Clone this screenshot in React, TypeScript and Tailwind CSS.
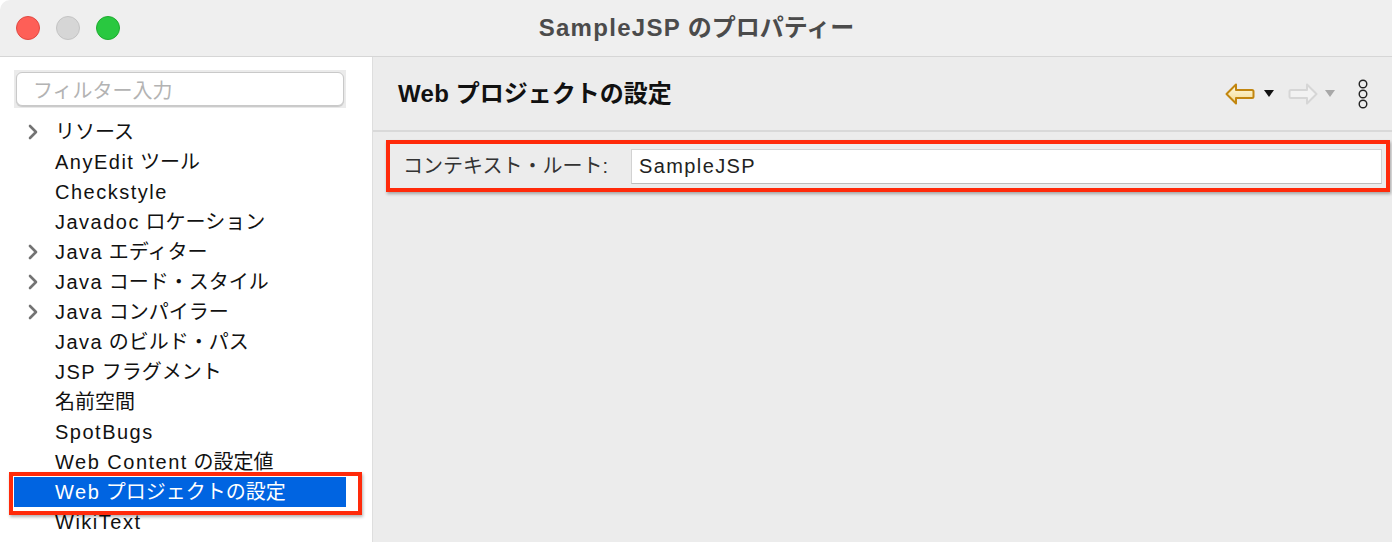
import React from "react";

const FONT = { fontFamily: '"Liberation Sans", "Noto Sans CJK JP", sans-serif' };

function T({ text, latin }: { text: string; latin: string }) {
  const parts = text.split(/([\x21-\x7E]+(?: [\x21-\x7E]+)*)/);
  return (
    <>
      {parts.map((p, i) =>
        /[\x21-\x7E]/.test(p) ? (
          <span key={i} className={latin}>
            {p}
          </span>
        ) : (
          <span key={i}>{p}</span>
        )
      )}
    </>
  );
}

type Item = { label: string; chevron?: boolean; selected?: boolean };

const items: Item[] = [
  { label: "リソース", chevron: true },
  { label: "AnyEdit ツール" },
  { label: "Checkstyle" },
  { label: "Javadoc ロケーション" },
  { label: "Java エディター", chevron: true },
  { label: "Java コード・スタイル", chevron: true },
  { label: "Java コンパイラー", chevron: true },
  { label: "Java のビルド・パス" },
  { label: "JSP フラグメント" },
  { label: "名前空間" },
  { label: "SpotBugs" },
  { label: "Web Content の設定値" },
  { label: "Web プロジェクトの設定", selected: true },
  { label: "WikiText" },
];

function Chevron() {
  return (
    <svg width="12" height="16" viewBox="0 0 12 16" className="shrink-0">
      <polyline points="3,2 9,8 3,14" fill="none" stroke="#737373" strokeWidth="2.6" strokeLinecap="round" strokeLinejoin="round" />
    </svg>
  );
}

function TreeRow({ item }: { item: Item }) {
  if (item.selected) {
    return (
      <div className="relative h-[30px] flex items-center pl-[14px] pr-[26px]">
        <div className="h-[30px] w-full bg-[#0064e1] flex items-center pl-[41px] text-white text-[20px]">
          <span>
            <T text={item.label} latin="tracking-[1.5px]" />
          </span>
        </div>
        <span className="pointer-events-none absolute left-[9px] right-[10px] top-[-5px] bottom-[-8px] border-[4px] border-[#ff2a0a] shadow-[1px_2px_3px_rgba(0,0,0,0.3)]" />
      </div>
    );
  }
  return (
    <div className="h-[30px] flex items-center text-[20px] text-[#111]">
      <div className="w-[55px] flex justify-end pr-[16px]">{item.chevron ? <Chevron /> : null}</div>
      <span>
        <T text={item.label} latin="tracking-[1.5px]" />
      </span>
    </div>
  );
}

function BackArrow() {
  return (
    <svg width="30" height="22" viewBox="0 0 30 22">
      <defs>
        <linearGradient id="bk" x1="0" y1="0" x2="0" y2="1">
          <stop offset="0" stopColor="#fffbe6" />
          <stop offset="1" stopColor="#f3d98a" />
        </linearGradient>
      </defs>
      <path d="M11 1.5 L1.5 11 L11 20.5 L11 15 L27 15 Q28.5 15 28.5 13.5 L28.5 8.5 Q28.5 7 27 7 L11 7 Z" fill="url(#bk)" stroke="#c2860f" strokeWidth="2" strokeLinejoin="round" />
    </svg>
  );
}

function ForwardArrow() {
  return (
    <svg width="30" height="22" viewBox="0 0 30 22">
      <path d="M19 1.5 L28.5 11 L19 20.5 L19 15 L3 15 Q1.5 15 1.5 13.5 L1.5 8.5 Q1.5 7 3 7 L19 7 Z" fill="#f2f2f2" stroke="#d6d6d6" strokeWidth="2" strokeLinejoin="round" />
    </svg>
  );
}

function Tri({ color }: { color: string }) {
  return (
    <svg width="10" height="7" viewBox="0 0 10 7">
      <polygon points="0,0 10,0 5,7" fill={color} />
    </svg>
  );
}

function Dots() {
  return (
    <svg width="10" height="30" viewBox="0 0 10 30">
      <circle cx="5" cy="5" r="3.8" fill="none" stroke="#222" strokeWidth="1.4" />
      <circle cx="5" cy="15" r="3.8" fill="none" stroke="#222" strokeWidth="1.4" />
      <circle cx="5" cy="25" r="3.8" fill="none" stroke="#222" strokeWidth="1.4" />
    </svg>
  );
}

export default function App() {
  return (
    <div className="w-[1392px] h-[542px] flex flex-col overflow-hidden bg-white" style={FONT}>
      {/* Title bar */}
      <div className="relative h-[57px] shrink-0 bg-[#efefef] border-b border-[#d6d6d6] rounded-tl-[10px] flex items-center justify-center">
        <div className="absolute left-[16px] top-[16px] flex gap-[16px]">
          <span className="w-[24px] h-[24px] rounded-full bg-[#fe5f57] border border-[#e14942]" />
          <span className="w-[24px] h-[24px] rounded-full bg-[#d6d6d6] border border-[#c4c4c4]" />
          <span className="w-[24px] h-[24px] rounded-full bg-[#29c840] border border-[#1eac2f]" />
        </div>
        <span className="text-[24px] font-bold text-[#4b4b4b] ml-[1px]">
          <T text="SampleJSP のプロパティー" latin="tracking-[1.3px]" />
        </span>
      </div>

      <div className="flex flex-1 min-h-0">
        {/* Left pane */}
        <div className="w-[373px] shrink-0 bg-white border-r border-[#dedede] pt-[13px]">
          <div className="ml-[14px] w-[332px] h-[38px] bg-[#ebebeb] p-[2px]">
            <div className="h-full rounded-[6px] bg-white border border-[#c9c9c9] shadow-[0_1px_1px_rgba(0,0,0,0.15)] flex items-center pl-[16px] pt-[3px] text-[20px] text-[#b3b3b3]">
              フィルター入力
            </div>
          </div>
          <div className="mt-[9px] flex flex-col">
            {items.map((it) => (
              <TreeRow key={it.label} item={it} />
            ))}
          </div>
        </div>

        {/* Right pane */}
        <div className="flex-1 bg-[#ececec] flex flex-col">
          <div className="h-[75px] border-b-2 border-[#d9d9d9] flex items-center pl-[25px] pr-[24px]">
            <span className="text-[24px] font-bold text-[#111] flex-1 pt-[1px]">
              <T text="Web プロジェクトの設定" latin="tracking-[0.3px]" />
            </span>
            <div className="flex items-center">
              <BackArrow />
              <span className="ml-[9px]"><Tri color="#111" /></span>
              <span className="ml-[14px]"><ForwardArrow /></span>
              <span className="ml-[7px]"><Tri color="#a8a8a8" /></span>
              <span className="ml-[23px]"><Dots /></span>
            </div>
          </div>
          <div className="mt-[8px] ml-[13px] mr-[2px] h-[52px] border-[4px] border-[#ff2a0a] shadow-[1px_2px_3px_rgba(0,0,0,0.3)] flex items-center pl-[13px] pr-[4px]">
            <span className="text-[20px] text-[#333] w-[228px] shrink-0">コンテキスト・ルート:</span>
            <div className="flex-1 h-[35px] bg-white border border-[#d2d2d2] border-b-[#bcbcbc] flex items-center pl-[7px] text-[20px] text-[#222]">
              <span>
                <T text="SampleJSP" latin="tracking-[1.4px]" />
              </span>
            </div>
          </div>
        </div>
      </div>
    </div>
  );
}
